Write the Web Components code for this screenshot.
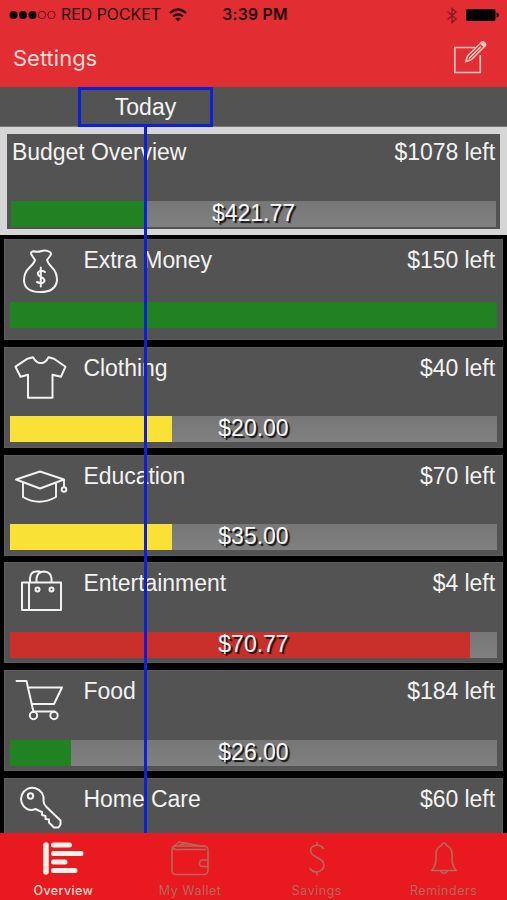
<!DOCTYPE html>
<html lang="en">
<head>
<meta charset="utf-8">
<title>Budget</title>
<style>
html,body{margin:0;height:900px;overflow:hidden;background:#000}
</style>
</head>
<body>
<budget-app></budget-app>
<script>
const line = (w, body, sw = 2) => `<svg width="${w[0]}" height="${w[1]}" viewBox="0 0 ${w[0]} ${w[1]}" fill="none" stroke="currentColor" stroke-width="${sw}" stroke-linejoin="round" stroke-linecap="round">${body}</svg>`;
const box = [60, 54];
const icons = {
  money: line(box, '<g transform="translate(0.500 .5)"><path d="M30.500 20.500L27.500 16Q25 12.500 29 11.800Q33 13 37 11.500Q41 10 45.500 12.500Q47.500 14 45.500 16.500L42.500 20.500Q43.500 24 47.500 28Q52.500 32.500 52.500 41Q51 52.500 36 52.500Q20 52.500 19.500 41Q19.500 33 25 28Q29.500 24 30.500 20.500Z"/><path d="M40.500 32.500Q36 29.700 33.500 33C32 38 40.500 37 40 41.500Q38 45.500 32.500 42.500M36.300 28v19"/></g>'),
  shirt: line(box, '<path d="M27.500 12 33 10.500Q36.500 16.500 41 16.300Q45.500 16.500 48.500 10.500L54 12 65.500 20 61 30 52.500 28V51H28V28L20.500 30 15.500 20Z" transform="translate(-4 -.3)"/>', 2),
  cap: line(box, '<path d="M12 24.500 36 16.500 60 24.500 36 33.500ZM19 28V42Q35 51.500 52 42V28M60 24.500V32"/><circle cx="60" cy="34.500" r="2.300"/>', 1.900),
  bag: line(box, '<path d="M18 20.500H57V48H18ZM25 20.500V47.500M26 20.500V16.500Q26.500 9.500 32 9.500Q35 9 37 10.500M32.500 20.500V16.500Q33.500 9.500 40 9.500Q47 10 47.500 16.500V20.500"/><circle cx="33.500" cy="27.500" r="2"/><circle cx="47.500" cy="27.500" r="2"/>'),
  cart: line(box, '<path d="M12.500 11H22.500L29.500 42M24.500 17.500H58L50 34H28M29.500 41.500H50.500"/><circle cx="29.500" cy="45.500" r="3.700"/><circle cx="50" cy="45.500" r="3.700"/>'),
  key: line(box, '<path d="M31.500 31Q27 33 23 31A11.300 11.300 0 1 1 39.500 23Q39.500 26 42.500 29L56.500 42.500V46.500L54.500 49.500H50L45 44.500V41.500L41.500 41V38L38 37V34L35.500 33Z"/><circle cx="26.500" cy="18" r="2.700"/>'),
  overview: '<svg width="44" height="36" viewBox="0 0 44 36" stroke="#ffefe9" stroke-width="5" stroke-linecap="round"><path d="M5 4V31" fill="none" stroke-width="5.500"/><path d="M12.500 4H28.500M12.500 12.500H40M12.500 21H24M12.500 29.500H34"/></svg>',
  wallet: line([44,36], '<rect x="4" y="5" width="36" height="28.500" rx="4"/><path d="M5 6 11 1 36 5.500M11 4.500 17 2.500 30 4.500M40 19H34Q32 19 31.500 22T34 25.500H40M5 7Q7 9.500 11 8.500H37.500"/>', 1.600),
  savings: line([44,36], '<path d="M28.500 7.500Q26.500 4.500 22 4Q15.500 5 15.500 10C16 17 29 16 29 24Q28.500 30 22 31Q17 31 15 27.500M22 1.500V4M22 31V34"/>', 1.600),
  bell: line([44,36], '<path d="M9.500 29.500Q14 25 14 18V13Q14.500 6 19.500 4.500Q20 2 22 2T24.500 4.500Q29.500 6 30 13V18Q30 25 34.500 29.500ZM18.500 30Q22 34.500 25.500 30"/>', 1.600)
};

function define(name, render) {
  customElements.define(name, class extends HTMLElement {
    constructor() { super(); this.attachShadow({mode: 'open'}); }
    connectedCallback() { this.shadowRoot.innerHTML = render(this); }
  });
}

define('status-bar', () => `<style>
:host{display:grid;grid-template-columns:1fr auto 1fr;align-items:center;height:30px;color:#210509;font:15.800px/30px Inter,"Liberation Sans",sans-serif}
div{display:flex;align-items:center}
b{font-weight:600;font-size:15.800px;letter-spacing:.2px;margin-left:3px}
.l{padding-left:9px}.c{white-space:nowrap;margin-left:5px}.r{justify-content:flex-end;padding-right:8px;gap:8px}
.c span{letter-spacing:.05px}
</style><div class="l"><svg width="47" height="10" viewBox="0 0 47 10"><g fill="#080001"><circle cx="4.500" cy="5" r="4"/><circle cx="14" cy="5" r="4"/><circle cx="23.500" cy="5" r="4"/></g><g fill="none" stroke="#681018" stroke-width="1"><circle cx="33" cy="5" r="3.700"/><circle cx="42.500" cy="5" r="3.700"/></g></svg><span class="c"><span id="carrier">RED POCKET</span></span><svg style="margin-left:8px" width="18" height="14" viewBox="0 0 18 14" fill="none" stroke="#210509" stroke-width="2.300"><path d="M1 5Q9-2 17 5M4 8.500Q9 4 14 8.500"/><path d="M6.200 10.500Q9 8.500 11.800 10.500L9 13.200Z" fill="#210509" stroke="none"/></svg></div><b>3:39 PM</b><div class="r"><svg width="12" height="17" viewBox="0 0 12 17" fill="none" stroke="#8d1920" stroke-width="1.400"><path d="M1.500 4.500 10 12 6 15.500V1.500L10 5 1.500 12.500"/></svg><svg width="33" height="14" viewBox="0 0 33 14"><rect x="0" y="1" width="29.500" height="12" rx="2" fill="#050001"/><path d="M30.500 4.500Q33 5 33 7T30.500 9.500Z" fill="#16070a"/></svg></div>`);

define('nav-bar', () => `<style>
:host{display:flex;justify-content:space-between;align-items:center;height:57px;padding:0 20px 0 13px;color:#ffd9d3;font:22px/57px Inter,"Liberation Sans",sans-serif}
span{letter-spacing:0}svg{margin-top:-4px}
</style><span><slot></slot></span><svg width="34" height="34" viewBox="0 0 34 34" fill="none" stroke="#ffc5bd" stroke-width="1.600"><path d="M22 7.500H1.800V32.500H27.300V15"/><path d="M12.800 21.500 14.500 16 28.300 2.500Q30 1.200 31.800 3T32 6L18.200 19.800ZM16 18.500 28 6.500"/><path d="M28 2.500 31.500 6" stroke-width="3"/></svg>`);

define('today-strip', () => `<style>
:host{display:block;height:40px;background:#535353;padding-left:78px}
div{box-sizing:border-box;position:relative;width:135px;height:40px;border:3px solid #0b20dc;color:#f4f4f4;text-align:center;font:23px/35px "Liberation Sans",Arial,sans-serif;margin-top:0}
i{position:absolute;z-index:5;left:63px;top:36px;width:3px;height:710px;background:#0b20dc}
</style><div><slot></slot><i></i></div>`);

define('progress-bar', el => {
  const colors = {green:'#208220', yellow:'#fae136', red:'#c9302c'};
  return `<style>
:host{display:grid;height:26px;background:linear-gradient(#777,#808080);color:#f6f6f6;font:23px/25px "Liberation Sans",Arial,sans-serif}
div,span{grid-area:1/1}
div{width:${el.getAttribute('fill')}px;background:${colors[el.getAttribute('tone')]}}
span{text-align:center;text-shadow:2px 2px 1px #111}
</style><div></div><span><slot></slot></span>`;
});

define('budget-row', el => {
  const a = n => el.getAttribute(n), main = el.hasAttribute('main');
  return `<style>
:host{box-sizing:border-box;display:flex;flex-direction:column;flex:none;background:#535353;color:#f2f2f2;font:23px/27px "Liberation Sans",Arial,sans-serif;
${main ? 'height:108px;border:solid #d6d6d6;border-width:7px 7px 6px;padding:0 4px 2px 4px' : 'height:101px;margin:0 4px;padding:0 6px 5.500px;box-shadow:inset 0 0 0 1px #5c5c5c'}}
header{display:flex;flex:1;min-height:0;align-items:flex-start}
svg{margin-left:-6px;width:60px;height:54px;flex:none;overflow:visible}
.n{flex:1;margin-left:${main ? 1 : 19.5}px;letter-spacing:-.05px}
.n,.v{margin-top:${main ? 5 : 8}px;white-space:nowrap}.v{margin-right:${main ? 1 : 2}px;letter-spacing:-.05px}
progress-bar{flex:none;${a('lift') ? 'margin-bottom:' + a('lift') + 'px' : ''}}
</style><header>${main ? '' : icons[a('icon')]}<span class="n">${a('name')}</span><span class="v">${a('left')}</span></header>
<progress-bar fill="${a('fill')}" tone="${a('tone')}">${a('amount') || ''}</progress-bar>`;
});

define('tab-item', el => `<style>
:host{display:flex;flex-direction:column;align-items:center;flex:1;padding-top:8px;color:${el.hasAttribute('on') ? '#ffd9cc' : '#b4695b'};font:${el.hasAttribute('on') ? 500 : 400} 12.500px/16px Inter,"Liberation Sans",sans-serif;letter-spacing:${el.hasAttribute('on') ? '.4px' : '.5px'}}
svg{display:block}span{margin-top:6px}
</style>${icons[el.getAttribute('icon')]}<span><slot></slot></span>`);

define('tab-bar', () => `<style>
:host{position:relative;z-index:6;display:flex;height:67px;background:#e8191f;flex:none}
</style><slot></slot>`);

define('budget-app', () => `<style>
:host{display:flex;flex-direction:column;width:507px;height:900px;overflow:hidden;background:#000}
.top{background:#e22d32;height:87px;flex:none}
today-strip{flex:none;border-bottom:1px solid #777;box-sizing:border-box}
main{flex:1;min-height:0;overflow:hidden;display:flex;flex-direction:column}
.list{display:flex;flex-direction:column;gap:6.830px;padding-top:4px}
</style>
<div class="top"><status-bar></status-bar><nav-bar>Settings</nav-bar></div>
<today-strip>Today</today-strip>
<main>
<budget-row main name="Budget Overview" left="$1078 left" fill="133" tone="green" amount="$421.77"></budget-row>
<div class="list">
<budget-row icon="money" name="Extra Money" left="$150 left" fill="487" tone="green" lift="7"></budget-row>
<budget-row icon="shirt" name="Clothing" left="$40 left" fill="162" tone="yellow" amount="$20.00"></budget-row>
<budget-row icon="cap" name="Education" left="$70 left" fill="162" tone="yellow" amount="$35.00"></budget-row>
<budget-row icon="bag" name="Entertainment" left="$4 left" fill="460" tone="red" amount="$70.77"></budget-row>
<budget-row icon="cart" name="Food" left="$184 left" fill="61" tone="green" amount="$26.00"></budget-row>
<budget-row icon="key" name="Home Care" left="$60 left" fill="0" tone="green"></budget-row>
</div></main>
<tab-bar><tab-item icon="overview" on>Overview</tab-item><tab-item icon="wallet">My Wallet</tab-item><tab-item icon="savings">Savings</tab-item><tab-item icon="bell">Reminders</tab-item></tab-bar>`);
</script>
</body>
</html>
